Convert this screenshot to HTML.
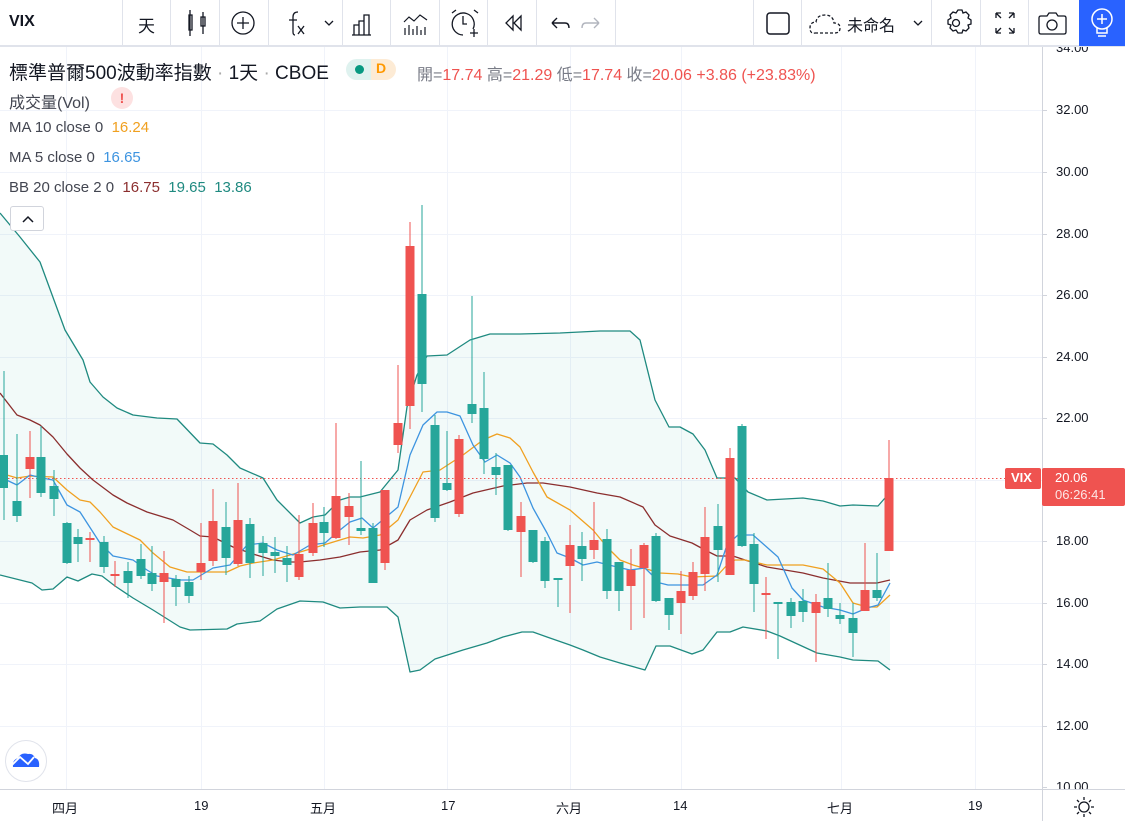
<!DOCTYPE html>
<html><head><meta charset="utf-8"><style>
*{margin:0;padding:0;box-sizing:border-box}
body{width:1125px;height:821px;overflow:hidden;background:#fff;font-family:"Liberation Sans","Noto Sans CJK TC",sans-serif;color:#131722;position:relative}
.tb{position:absolute;left:0;top:0;width:1125px;height:47px;border-bottom:2px solid #e0e3eb;background:#fff}
.sep{position:absolute;top:0;width:1px;height:46px;background:#e0e3eb}
.leg{position:absolute;left:9px;font-size:15px;color:#434651;white-space:nowrap}
.ax{position:absolute;left:1056px;font-size:13px;color:#131722}
.tx{position:absolute;top:798px;font-size:13px;color:#131722}
</style></head><body>
<svg width="1125" height="821" style="position:absolute;left:0;top:0">
<g stroke="#f0f3fa" stroke-width="1">
<line x1="0" y1="110.5" x2="1042" y2="110.5"/><line x1="0" y1="172.5" x2="1042" y2="172.5"/><line x1="0" y1="234.5" x2="1042" y2="234.5"/><line x1="0" y1="295.5" x2="1042" y2="295.5"/><line x1="0" y1="357.5" x2="1042" y2="357.5"/><line x1="0" y1="418.5" x2="1042" y2="418.5"/><line x1="0" y1="480.5" x2="1042" y2="480.5"/><line x1="0" y1="541.5" x2="1042" y2="541.5"/><line x1="0" y1="603.5" x2="1042" y2="603.5"/><line x1="0" y1="664.5" x2="1042" y2="664.5"/><line x1="0" y1="726.5" x2="1042" y2="726.5"/>
<line x1="66.5" y1="47" x2="66.5" y2="789"/><line x1="201.5" y1="47" x2="201.5" y2="789"/><line x1="324.5" y1="47" x2="324.5" y2="789"/><line x1="447.5" y1="47" x2="447.5" y2="789"/><line x1="570.5" y1="47" x2="570.5" y2="789"/><line x1="681.5" y1="47" x2="681.5" y2="789"/><line x1="841.5" y1="47" x2="841.5" y2="789"/><line x1="975.5" y1="47" x2="975.5" y2="789"/>
</g>
<polygon fill="#26a69a" fill-opacity="0.06" points="0,213 20,237 40,262 65,330 83,360 90,382 103,397 117,408 133,415 157,418 177,419 200,443 213,444 227,455 240,468 263,478 277,500 300,523 313,517 325,515 333,507 340,500 350,497 360,497 380,492 398,470 407,407 417,375 427,356 447,355 470,340 490,334 520,334 560,333 600,331 630,331 640,340 655,400 669,427 680,427 693,434 705,450 717,478 735,478 748,492 767,500 803,498 823,501 840,506 853,505 878,506 885,498 890,495 890,670 878,661 853,660 840,657 817,653 780,636 767,631 743,627 730,632 717,632 703,650 692,654 670,646 656,646 645,670 620,663 600,657 583,650 570,645 547,637 533,632 522,632 503,637 487,643 463,650 435,659 420,670 410,672 398,617 387,607 360,607 340,608 323,602 300,601 277,609 260,621 237,624 227,629 190,630 180,627 153,610 133,598 115,586 102,576 92,574 78,581 67,577 53,589 42,590 32,583 0,575"/>
<g fill="none" stroke-width="1.3" stroke-linejoin="round">
<polyline stroke="#1f8a80" points="0,213 20,237 40,262 65,330 83,360 90,382 103,397 117,408 133,415 157,418 177,419 200,443 213,444 227,455 240,468 263,478 277,500 300,523 313,517 325,515 333,507 340,500 350,497 360,497 380,492 398,470 407,407 417,375 427,356 447,355 470,340 490,334 520,334 560,333 600,331 630,331 640,340 655,400 669,427 680,427 693,434 705,450 717,478 735,478 748,492 767,500 803,498 823,501 840,506 853,505 878,506 885,498 890,495"/>
<polyline stroke="#1f8a80" points="0,575 32,583 42,590 53,589 67,577 78,581 92,574 102,576 115,586 133,598 153,610 180,627 190,630 227,629 237,624 260,621 277,609 300,601 323,602 340,608 360,607 387,607 398,617 410,672 420,670 435,659 463,650 487,643 503,637 522,632 533,632 547,637 570,645 583,650 600,657 620,663 645,670 656,646 670,646 692,654 703,650 717,632 730,632 743,627 767,631 780,636 817,653 840,657 853,660 878,661 890,670"/>
<polyline stroke="#8b2e2e" points="0,393 17,415 30,420 40,425 53,437 67,454 80,468 93,480 113,495 127,503 147,512 173,520 190,530 200,536 213,537 233,547 253,554 273,560 290,562 300,562 320,560 340,557 360,552 380,550 398,540 410,520 427,510 450,502 473,493 503,486 527,483 543,483 570,487 597,493 620,497 643,507 655,525 670,536 692,543 705,550 717,556 733,556 745,560 767,567 803,573 823,578 850,583 877,583 890,580"/>
<polyline stroke="#f0a020" points="0,473 17,478 30,476 53,477 67,490 80,500 90,502 100,512 113,527 140,540 153,553 170,567 187,572 227,572 240,566 253,563 273,560 290,555 317,547 340,540 350,537 363,538 380,535 398,520 410,497 423,472 440,470 463,455 483,440 497,434 510,438 520,447 533,472 547,497 570,510 593,530 607,547 620,560 633,565 660,573 678,574 692,577 717,576 727,565 735,560 745,560 767,565 803,565 823,569 840,583 853,603 867,607 877,607 890,595"/>
<polyline stroke="#3d94e0" points="0,477 17,485 30,475 42,478 53,480 67,505 80,512 100,543 113,556 133,560 147,570 157,576 180,580 193,580 213,568 230,565 247,545 263,543 277,550 293,555 310,545 325,543 340,530 350,522 362,518 373,528 398,507 410,455 423,425 437,412 447,412 460,416 473,445 485,462 497,455 510,463 520,477 533,508 547,533 557,553 570,558 583,565 597,562 617,567 630,570 645,568 660,583 668,585 703,585 717,575 727,545 738,535 753,535 778,557 792,588 803,600 823,607 840,610 853,614 867,608 878,605 890,583"/>
</g>
<line x1="0" y1="478.5" x2="1005" y2="478.5" stroke="#ef5350" stroke-width="1" stroke-dasharray="1.5,2.5"/>
<g fill="#26a69a" stroke="#26a69a">
<line x1="4" y1="371" x2="4" y2="520"/><rect x="0" y="455" width="8" height="33" stroke="none"/>
<line x1="17" y1="434" x2="17" y2="522"/><rect x="12.5" y="501" width="9" height="15" stroke="none"/>
<line x1="41" y1="426" x2="41" y2="497"/><rect x="36.5" y="457" width="9" height="36" stroke="none"/>
<line x1="54" y1="470" x2="54" y2="516"/><rect x="49.5" y="486" width="9" height="13" stroke="none"/>
<line x1="67" y1="522" x2="67" y2="564"/><rect x="62.5" y="523" width="9" height="40" stroke="none"/>
<line x1="78" y1="529" x2="78" y2="562"/><rect x="73.5" y="537" width="9" height="7" stroke="none"/>
<line x1="104" y1="536" x2="104" y2="573"/><rect x="99.5" y="542" width="9" height="25" stroke="none"/>
<line x1="128" y1="562" x2="128" y2="598"/><rect x="123.5" y="571" width="9" height="12" stroke="none"/>
<line x1="141" y1="544" x2="141" y2="579"/><rect x="136.5" y="559" width="9" height="17" stroke="none"/>
<line x1="152" y1="546" x2="152" y2="591"/><rect x="147.5" y="573" width="9" height="11" stroke="none"/>
<line x1="176" y1="575" x2="176" y2="606"/><rect x="171.5" y="579" width="9" height="8" stroke="none"/>
<line x1="189" y1="576" x2="189" y2="603"/><rect x="184.5" y="582" width="9" height="14" stroke="none"/>
<line x1="226" y1="502" x2="226" y2="575"/><rect x="221.5" y="527" width="9" height="31" stroke="none"/>
<line x1="250" y1="518" x2="250" y2="578"/><rect x="245.5" y="524" width="9" height="39" stroke="none"/>
<line x1="263" y1="536" x2="263" y2="576"/><rect x="258.5" y="543" width="9" height="10" stroke="none"/>
<line x1="275" y1="537" x2="275" y2="573"/><rect x="270.5" y="552" width="9" height="4" stroke="none"/>
<line x1="287" y1="546" x2="287" y2="582"/><rect x="282.5" y="558" width="9" height="7" stroke="none"/>
<line x1="324" y1="507" x2="324" y2="547"/><rect x="319.5" y="522" width="9" height="11" stroke="none"/>
<line x1="361" y1="461" x2="361" y2="535"/><rect x="356.5" y="528" width="9" height="3" stroke="none"/>
<line x1="373" y1="523" x2="373" y2="583"/><rect x="368.5" y="528" width="9" height="55" stroke="none"/>
<line x1="422" y1="205" x2="422" y2="412"/><rect x="417.5" y="294" width="9" height="90" stroke="none"/>
<line x1="435" y1="415" x2="435" y2="522"/><rect x="430.5" y="425" width="9" height="93" stroke="none"/>
<line x1="447" y1="431" x2="447" y2="491"/><rect x="442.5" y="483" width="9" height="7" stroke="none"/>
<line x1="472" y1="296" x2="472" y2="423"/><rect x="467.5" y="404" width="9" height="10" stroke="none"/>
<line x1="484" y1="372" x2="484" y2="474"/><rect x="479.5" y="408" width="9" height="51" stroke="none"/>
<line x1="496" y1="453" x2="496" y2="495"/><rect x="491.5" y="467" width="9" height="8" stroke="none"/>
<line x1="508" y1="465" x2="508" y2="531"/><rect x="503.5" y="465" width="9" height="65" stroke="none"/>
<line x1="533" y1="530" x2="533" y2="563"/><rect x="528.5" y="530" width="9" height="32" stroke="none"/>
<line x1="545" y1="537" x2="545" y2="588"/><rect x="540.5" y="541" width="9" height="40" stroke="none"/>
<line x1="558" y1="578" x2="558" y2="607"/><rect x="553.5" y="578" width="9" height="2" stroke="none"/>
<line x1="582" y1="532" x2="582" y2="581"/><rect x="577.5" y="546" width="9" height="13" stroke="none"/>
<line x1="607" y1="529" x2="607" y2="599"/><rect x="602.5" y="539" width="9" height="52" stroke="none"/>
<line x1="619" y1="562" x2="619" y2="611"/><rect x="614.5" y="562" width="9" height="29" stroke="none"/>
<line x1="656" y1="533" x2="656" y2="602"/><rect x="651.5" y="536" width="9" height="65" stroke="none"/>
<line x1="669" y1="598" x2="669" y2="630"/><rect x="664.5" y="598" width="9" height="17" stroke="none"/>
<line x1="718" y1="504" x2="718" y2="582"/><rect x="713.5" y="526" width="9" height="24" stroke="none"/>
<line x1="742" y1="424" x2="742" y2="547"/><rect x="737.5" y="426" width="9" height="120" stroke="none"/>
<line x1="754" y1="533" x2="754" y2="612"/><rect x="749.5" y="544" width="9" height="40" stroke="none"/>
<line x1="778" y1="603" x2="778" y2="659"/><rect x="773.5" y="602" width="9" height="2" stroke="none"/>
<line x1="791" y1="598" x2="791" y2="628"/><rect x="786.5" y="602" width="9" height="14" stroke="none"/>
<line x1="803" y1="589" x2="803" y2="622"/><rect x="798.5" y="601" width="9" height="11" stroke="none"/>
<line x1="828" y1="563" x2="828" y2="617"/><rect x="823.5" y="598" width="9" height="11" stroke="none"/>
<line x1="840" y1="603" x2="840" y2="624"/><rect x="835.5" y="615" width="9" height="4" stroke="none"/>
<line x1="853" y1="603" x2="853" y2="657"/><rect x="848.5" y="618" width="9" height="15" stroke="none"/>
<line x1="877" y1="553" x2="877" y2="601"/><rect x="872.5" y="590" width="9" height="8" stroke="none"/>
</g>
<g fill="#ef5350" stroke="#ef5350">
<line x1="30" y1="431" x2="30" y2="498"/><rect x="25.5" y="457" width="9" height="12" stroke="none"/>
<line x1="90" y1="532" x2="90" y2="562"/><rect x="85.5" y="538" width="9" height="2" stroke="none"/>
<line x1="115" y1="561" x2="115" y2="587"/><rect x="110.5" y="574" width="9" height="2" stroke="none"/>
<line x1="164" y1="551" x2="164" y2="623"/><rect x="159.5" y="573" width="9" height="9" stroke="none"/>
<line x1="201" y1="523" x2="201" y2="580"/><rect x="196.5" y="563" width="9" height="9" stroke="none"/>
<line x1="213" y1="489" x2="213" y2="566"/><rect x="208.5" y="521" width="9" height="40" stroke="none"/>
<line x1="238" y1="483" x2="238" y2="566"/><rect x="233.5" y="520" width="9" height="44" stroke="none"/>
<line x1="299" y1="515" x2="299" y2="580"/><rect x="294.5" y="554" width="9" height="23" stroke="none"/>
<line x1="313" y1="503" x2="313" y2="556"/><rect x="308.5" y="523" width="9" height="30" stroke="none"/>
<line x1="336" y1="423" x2="336" y2="539"/><rect x="331.5" y="496" width="9" height="42" stroke="none"/>
<line x1="349" y1="493" x2="349" y2="545"/><rect x="344.5" y="506" width="9" height="11" stroke="none"/>
<line x1="385" y1="490" x2="385" y2="570"/><rect x="380.5" y="490" width="9" height="73" stroke="none"/>
<line x1="398" y1="365" x2="398" y2="453"/><rect x="393.5" y="423" width="9" height="22" stroke="none"/>
<line x1="410" y1="222" x2="410" y2="429"/><rect x="405.5" y="246" width="9" height="160" stroke="none"/>
<line x1="459" y1="435" x2="459" y2="517"/><rect x="454.5" y="439" width="9" height="75" stroke="none"/>
<line x1="521" y1="502" x2="521" y2="577"/><rect x="516.5" y="516" width="9" height="16" stroke="none"/>
<line x1="570" y1="525" x2="570" y2="613"/><rect x="565.5" y="545" width="9" height="21" stroke="none"/>
<line x1="594" y1="502" x2="594" y2="559"/><rect x="589.5" y="540" width="9" height="10" stroke="none"/>
<line x1="631" y1="549" x2="631" y2="630"/><rect x="626.5" y="570" width="9" height="16" stroke="none"/>
<line x1="644" y1="543" x2="644" y2="618"/><rect x="639.5" y="545" width="9" height="23" stroke="none"/>
<line x1="681" y1="571" x2="681" y2="634"/><rect x="676.5" y="591" width="9" height="12" stroke="none"/>
<line x1="693" y1="562" x2="693" y2="600"/><rect x="688.5" y="572" width="9" height="24" stroke="none"/>
<line x1="705" y1="507" x2="705" y2="591"/><rect x="700.5" y="537" width="9" height="37" stroke="none"/>
<line x1="730" y1="448" x2="730" y2="575"/><rect x="725.5" y="458" width="9" height="117" stroke="none"/>
<line x1="766" y1="577" x2="766" y2="639"/><rect x="761.5" y="593" width="9" height="2" stroke="none"/>
<line x1="816" y1="594" x2="816" y2="662"/><rect x="811.5" y="602" width="9" height="11" stroke="none"/>
<line x1="865" y1="543" x2="865" y2="611"/><rect x="860.5" y="590" width="9" height="21" stroke="none"/>
<line x1="889" y1="440" x2="889" y2="551"/><rect x="884.5" y="478" width="9" height="73" stroke="none"/>
</g>
<line x1="1042.5" y1="47" x2="1042.5" y2="821" stroke="#d1d4dc"/>
<line x1="0" y1="789.5" x2="1125" y2="789.5" stroke="#d1d4dc"/>
<g stroke="#d1d4dc"><line x1="1043" y1="110.5" x2="1047" y2="110.5"/><line x1="1043" y1="172.5" x2="1047" y2="172.5"/><line x1="1043" y1="234.5" x2="1047" y2="234.5"/><line x1="1043" y1="295.5" x2="1047" y2="295.5"/><line x1="1043" y1="357.5" x2="1047" y2="357.5"/><line x1="1043" y1="418.5" x2="1047" y2="418.5"/><line x1="1043" y1="541.5" x2="1047" y2="541.5"/><line x1="1043" y1="603.5" x2="1047" y2="603.5"/><line x1="1043" y1="664.5" x2="1047" y2="664.5"/><line x1="1043" y1="726.5" x2="1047" y2="726.5"/><line x1="1043" y1="787.5" x2="1047" y2="787.5"/></g>
<rect x="1005" y="468" width="36" height="21" rx="2" fill="#ef5350"/>
<rect x="1042" y="468" width="83" height="38" rx="2" fill="#ef5350"/>
<circle cx="26" cy="761" r="20.5" fill="#fff" stroke="#e0e3eb"/>
<path d="M13 767 Q12 760 18 758 Q21 752 28 754 Q33 753 35 758 Q40 759 39 767 Z" fill="#2962ff"/>
<path d="M12 765 L20 757 L28 764 L34 757" fill="none" stroke="#fff" stroke-width="1.8"/>
<g fill="none" stroke="#131722" stroke-width="1.3"><circle cx="1084" cy="807" r="5"/><path d="M1084 797v3M1084 814v3M1074 807h3M1091 807h3M1077 800l2 2M1089 812l2 2M1077 814l2-2M1089 802l2-2"/></g>
</svg>
<div class="ax" style="top:40px;clip-path:inset(7px 0 0 0)">34.00</div>
<div class="ax" style="top:102px">32.00</div><div class="ax" style="top:164px">30.00</div><div class="ax" style="top:226px">28.00</div><div class="ax" style="top:287px">26.00</div><div class="ax" style="top:349px">24.00</div><div class="ax" style="top:410px">22.00</div><div class="ax" style="top:533px">18.00</div><div class="ax" style="top:595px">16.00</div><div class="ax" style="top:656px">14.00</div><div class="ax" style="top:718px">12.00</div><div class="ax" style="top:779px;height:10px;overflow:hidden">10.00</div>
<div style="position:absolute;left:1011px;top:470px;font-size:13px;color:#fff;font-weight:bold">VIX</div>
<div style="position:absolute;left:1055px;top:469px;font-size:13px;color:#fff;line-height:17px">20.06<br><span style="opacity:.85">06:26:41</span></div>
<div class="tx" style="left:52px">四月</div><div class="tx" style="left:194px">19</div><div class="tx" style="left:310px">五月</div><div class="tx" style="left:441px">17</div><div class="tx" style="left:556px">六月</div><div class="tx" style="left:673px">14</div><div class="tx" style="left:827px">七月</div><div class="tx" style="left:968px">19</div>
<div class="leg" style="top:58px;font-size:19px;color:#131722">標準普爾500波動率指數 <span style="color:#aaa">·</span> 1天 <span style="color:#aaa">·</span> CBOE</div>
<div style="position:absolute;left:346px;top:59px;width:50px;height:21px;border-radius:11px;background:linear-gradient(90deg,#dff2ef 50%,#fdebd5 50%)"></div>
<div style="position:absolute;left:355px;top:65px;width:9px;height:9px;border-radius:50%;background:#089981"></div>
<div style="position:absolute;left:376px;top:60px;font-size:14px;font-weight:bold;color:#ff9800">D</div>
<div class="leg" style="left:417px;top:61px;font-size:16px;color:#787b86">開=<span style="color:#ef5350">17.74</span> 高=<span style="color:#ef5350">21.29</span> 低=<span style="color:#ef5350">17.74</span> 收=<span style="color:#ef5350">20.06</span> <span style="color:#ef5350">+3.86 (+23.83%)</span></div>
<div class="leg" style="top:89px;font-size:16px">成交量(Vol)</div>
<div style="position:absolute;left:111px;top:87px;width:22px;height:22px;border-radius:50%;background:#fde1e1;color:#ef5350;font-weight:bold;font-size:14px;text-align:center;line-height:22px">!</div>
<div class="leg" style="top:119px">MA 10 close 0 &nbsp;<span style="color:#f0a020">16.24</span></div>
<div class="leg" style="top:149px">MA 5 close 0 &nbsp;<span style="color:#3d94e0">16.65</span></div>
<div class="leg" style="top:179px">BB 20 close 2 0 &nbsp;<span style="color:#8b2e2e">16.75</span> &nbsp;<span style="color:#1f8a80">19.65</span> &nbsp;<span style="color:#1f8a80">13.86</span></div>
<div style="position:absolute;left:10px;top:206px;width:34px;height:25px;border:1px solid #d1d4dc;border-radius:3px;background:#fff"><svg width="34" height="25"><path d="M12 15l5-5 5 5" fill="none" stroke="#131722" stroke-width="1.5"/></svg></div>
<div class="tb">
<div style="position:absolute;left:9px;top:13px;font-size:16px;font-weight:bold">VIX</div>
<div class="sep" style="left:122px"></div><div class="sep" style="left:170px"></div><div class="sep" style="left:219px"></div><div class="sep" style="left:268px"></div><div class="sep" style="left:342px"></div><div class="sep" style="left:390px"></div><div class="sep" style="left:439px"></div><div class="sep" style="left:487px"></div><div class="sep" style="left:536px"></div><div class="sep" style="left:615px"></div><div class="sep" style="left:753px"></div><div class="sep" style="left:801px"></div><div class="sep" style="left:931px"></div><div class="sep" style="left:980px"></div><div class="sep" style="left:1028px"></div>
<div style="position:absolute;left:138px;top:12px;font-size:17px">天</div>
<svg width="1125" height="46" style="position:absolute;left:0;top:0" fill="none" stroke="#131722" stroke-width="1.3">
<path d="M190 10v26M189 15h3v15h-3zM203 12v22M201 17h4v9h-4z"/>
<circle cx="243" cy="23" r="11"/><path d="M243 17v12M237 23h12"/>
<path d="M295 35q-2 0-2-3v-15q0-5 5-5M289 20h8M298 26l6 8M304 26l-6 8"/>
<path d="M325 21l4 4 4-4"/>
<path d="M354 35v-10h5v10M359 35v-14h5v14M364 35v-20h5v20M352 35h19"/>
<path d="M404 22l5-5 5 4 6-6 7 5M405 35v-7M409 35v-10M413 35v-6M417 35v-9M421 35v-5M425 35v-8" stroke-width="1.2"/>
<path d="M463 35a11 11 0 1 1 10-6M463 16v8h4M452 13l4-3M474 10l4 3M470 33h8M474 29v8"/>
<path d="M513 16l-7 7 7 7zM521 16l-7 7 7 7z"/>
<path d="M552 23h13q4 0 4 5M552 23l5-5M552 23l5 5" stroke-width="1.4"/>
<path d="M599 23h-13q-4 0-4 5M599 23l-5-5M599 23l-5 5" stroke="#b2b5be" stroke-width="1.4"/>
<rect x="767" y="13" width="22" height="21" rx="3" stroke-width="1.5"/>
<path d="M815 33h20q5 0 5-5t-6-5q-1-8-9-8t-9 7q-6 0-6 6t5 5" stroke-dasharray="3,2"/>
<path d="M914 21l4 4 4-4"/>
<path d="M950 15l3-3 3 1 2-3h4l1 3 3-1 3 3-1 3 3 2v4l-3 1 1 3-3 3-3-1-1 3h-4l-2-3-3 1-3-3 1-3-3-1v-4l3-2z"/><circle cx="956" cy="23" r="3.5"/>
<path d="M996 13v5M996 13h5M996 13l5 5M1014 13v5M1014 13h-5M1014 13l-5 5M996 33v-5M996 33h5M996 33l5-5M1014 33v-5M1014 33h-5M1014 33l-5-5"/>
<path d="M1041 16h6l2-3h7l2 3h6q2 0 2 2v14q0 2-2 2h-23q-2 0-2-2v-14q0-2 2-2z"/><circle cx="1052" cy="25" r="5"/>
</svg>
<div style="position:absolute;left:1079px;top:0;width:46px;height:46px;background:#2962ff"><svg width="46" height="46" fill="none" stroke="#fff" stroke-width="1.5"><circle cx="23" cy="19" r="10"/><path d="M23 14v10M18 19h10M18 28v5h10v-5M19 36h8"/></svg></div>
<div style="position:absolute;left:847px;top:12px;font-size:16px">未命名</div>
</div>
</body></html>
